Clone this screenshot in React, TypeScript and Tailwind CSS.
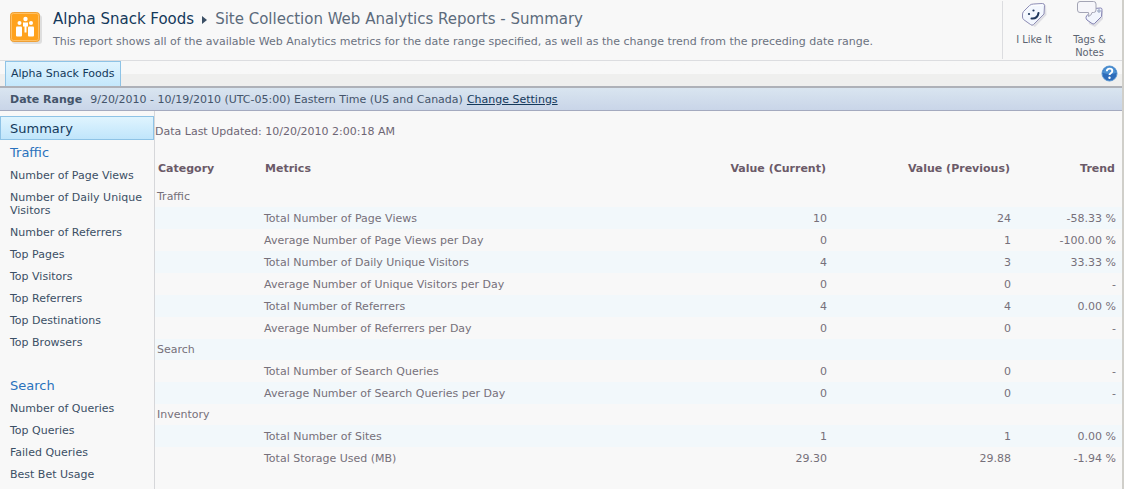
import React from "react";

const trafficLinks = [
    "Number of Page Views",
    "Number of Daily Unique Visitors",
    "Number of Referrers",
    "Top Pages",
    "Top Visitors",
    "Top Referrers",
    "Top Destinations",
    "Top Browsers",
];

const searchLinks = ["Number of Queries", "Top Queries", "Failed Queries", "Best Bet Usage"];

interface Metric {
    name: string;
    current: string;
    previous: string;
    trend: string;
}

const groups: { category: string; metrics: Metric[] }[] = [
    {
        category: "Traffic",
        metrics: [
            { name: "Total Number of Page Views", current: "10", previous: "24", trend: "-58.33 %" },
            { name: "Average Number of Page Views per Day", current: "0", previous: "1", trend: "-100.00 %" },
            { name: "Total Number of Daily Unique Visitors", current: "4", previous: "3", trend: "33.33 %" },
            { name: "Average Number of Unique Visitors per Day", current: "0", previous: "0", trend: "-" },
            { name: "Total Number of Referrers", current: "4", previous: "4", trend: "0.00 %" },
            { name: "Average Number of Referrers per Day", current: "0", previous: "0", trend: "-" },
        ],
    },
    {
        category: "Search",
        metrics: [
            { name: "Total Number of Search Queries", current: "0", previous: "0", trend: "-" },
            { name: "Average Number of Search Queries per Day", current: "0", previous: "0", trend: "-" },
        ],
    },
    {
        category: "Inventory",
        metrics: [
            { name: "Total Number of Sites", current: "1", previous: "1", trend: "0.00 %" },
            { name: "Total Storage Used (MB)", current: "29.30", previous: "29.88", trend: "-1.94 %" },
        ],
    },
];

function SiteLogo() {
    return (
        <svg width="34" height="34" viewBox="0 0 34 34" className="shrink-0" aria-hidden="true">
            <rect x="2" y="3" width="30" height="29" rx="3" fill="#dedede" />
            <rect x="0.5" y="0.5" width="29" height="29" rx="3" fill="#ffa21c" stroke="#efa035" />
            <rect x="1.5" y="1.5" width="27" height="27" rx="2" fill="none" stroke="#ffc063" />
            <g fill="#fff">
                <circle cx="15.5" cy="7" r="2.2" />
                <circle cx="9.5" cy="11" r="2" />
                <circle cx="21" cy="11" r="2" />
                <path d="M13 10.500h5v4h-1.500v6h-2v-6H13z" />
                <rect x="6" y="14.500" width="6" height="10" rx="1" />
                <rect x="18" y="14.500" width="6" height="10" rx="1" />
            </g>
        </svg>
    );
}

function LikeIcon() {
    return (
        <svg width="28" height="28" viewBox="0 0 28 28" aria-hidden="true">
            <path d="M5 14L13 6l13-1 .5 10L15 27l-9-5z" fill="#dfdfe4" />
            <path d="M2.500 15Q2.300 13 3.500 11.500L9.500 5.500Q11 4 13.500 4L22.500 3.500Q24.500 3.500 24.500 5.500L24 14 13.500 24.500Q12 26 10.500 24.500L3.500 19.500Q2.700 18.700 2.500 17z" fill="#f3f7fe" stroke="#8f8eb5" />
            <path d="M4.500 15q0-2 1-3l5-5q1-1.500 3.500-1.500l8-.5" fill="none" stroke="#fff" />
            <circle cx="9" cy="14" r="1.100" fill="#20385c" />
            <circle cx="13.500" cy="10.500" r="1.100" fill="#20385c" />
            <path d="M11.500 18.500q6 .500 7-5.500" fill="none" stroke="#20385c" strokeWidth="2" strokeLinecap="round" />
        </svg>
    );
}

function TagsIcon() {
    return (
        <svg width="28" height="28" viewBox="0 0 28 28" aria-hidden="true">
            <path d="M12 17l8-7 7 1v8l-8 8-6-3z" fill="#dddde3" />
            <path d="M10.500 16L18 8.500 24.500 8q1.500 0 1.500 1.500L25.500 16.500l-7 7q-1.500 1-2.500 0l-5-3.500q-1-1-1-2.500z" fill="#f1f5fd" stroke="#8281b2" />
            <circle cx="23" cy="11" r="1.200" fill="#fff" stroke="#6a7fa8" strokeWidth="0.800" />
            <path d="M4 1.500h13.500q2.500 0 2.500 2.500v6q0 2.500-2.500 2.500h-1.500q-.500 3-3.500 4 .500-2 0-4H4q-2.500 0-2.500-2.500V4q0-2.500 2.500-2.500z" fill="#f6f6fa" stroke="#a4a5b5" />
        </svg>
    );
}

function HelpIcon() {
    return (
        <svg width="17" height="17" viewBox="0 0 17 17" aria-hidden="true">
            <circle cx="8.500" cy="8.500" r="7.500" fill="#2d6cba" stroke="#5b97d2" />
            <path d="M2 8a6.500 6.500 0 0 1 13 0q-6 2-13 0z" fill="#4c91d3" />
            <path d="M5.800 6.200q0-2.600 2.800-2.600 2.700 0 2.700 2.300 0 1.500-1.500 2.300-1.300.800-1.300 1.800" fill="none" stroke="#fff" strokeWidth="1.900" />
            <circle cx="8.500" cy="12.700" r="1.200" fill="#fff" />
        </svg>
    );
}

function NavGroup({ title, links }: { title: string; links: string[] }) {
    return (
        <section>
            <h2 className="h-6 px-[10px] text-[13px] leading-[26px] text-[#2a72bd]">
                <a href="#">{title}</a>
            </h2>
            <ul>
                {links.map((link) => (
                    <li key={link} className="pl-[10px] pr-1 pt-[5px] pb-[4px] leading-[13px]">
                        <a href="#" className="block text-[#3b4f65]">{link}</a>
                    </li>
                ))}
            </ul>
        </section>
    );
}

function MetricsTable() {
    return (
        <table className="mt-[13px] w-full table-fixed border-collapse text-[#76707a]">
            <colgroup>
                <col className="w-[107px]" />
                <col />
                <col className="w-[160px]" />
                <col className="w-[184px]" />
                <col className="w-[105px]" />
            </colgroup>
            <thead>
                <tr className="h-[35px] align-middle text-left text-[#6b5a68]">
                    <th className="p-0 pl-[3px]">Category</th>
                    <th className="p-0 pl-[3px]">Metrics</th>
                    <th className="p-0 pr-[7px] text-right">Value (Current)</th>
                    <th className="p-0 pr-[7px] text-right">Value (Previous)</th>
                    <th className="p-0 pr-[7px] text-right">Trend</th>
                </tr>
            </thead>
            <tbody>
                {groups.map((group) => (
                    <React.Fragment key={group.category}>
                        <tr className="h-[21px] even:bg-[#f2f8fb]">
                            <td className="p-0 pl-[2px]" colSpan={5}>{group.category}</td>
                        </tr>
                        {group.metrics.map((metric) => (
                            <tr key={metric.name} className="h-[22px] even:bg-[#f2f8fb]">
                                <td className="p-0"></td>
                                <td className="p-0 pl-[2px]">{metric.name}</td>
                                <td className="p-0 pr-[6px] text-right">{metric.current}</td>
                                <td className="p-0 pr-[6px] text-right">{metric.previous}</td>
                                <td className="p-0 pr-[6px] text-right">{metric.trend}</td>
                            </tr>
                        ))}
                    </React.Fragment>
                ))}
            </tbody>
        </table>
    );
}

export default function App() {
    return (
        <div className="flex min-h-screen flex-col border-r-2 border-[#d0cfca] bg-[#f8f8f8] font-['DejaVu_Sans',sans-serif] text-[11px] leading-[13px]">
            <header className="flex h-[61px] border-b border-[#dcdde0]">
                <div className="flex flex-1 gap-[9px] pl-[10px] pt-3">
                    <SiteLogo />
                    <div>
                        <h1 className="flex items-center text-[15px] leading-[14px] text-[#5c6b7c]">
                            <a href="#" className="text-[#14395b]">Alpha Snack Foods</a>
                            <svg width="5" height="8" viewBox="0 0 5 8" className="mx-2 mt-[2px]" aria-hidden="true">
                                <path d="M0 0l5 4-5 4z" fill="#3b4f65" />
                            </svg>
                            Site Collection Web Analytics Reports - Summary
                        </h1>
                        <p className="mt-[9px] text-[#6b7280]">
                            This report shows all of the available Web Analytics metrics for the date range specified, as well as the change trend from the preceding date range.
                        </p>
                    </div>
                </div>
                <div className="mt-px flex h-[58px] border-l border-[#dcdde0] px-1 font-['DejaVu_Sans_Condensed','DejaVu_Sans',sans-serif] text-[#5c6472]">
                    <button className="-mt-px flex w-[54px] flex-col items-center gap-[5px]">
                        <LikeIcon />
                        <span>I Like It</span>
                    </button>
                    <button className="-mt-px flex w-[57px] flex-col items-center gap-[5px]">
                        <TagsIcon />
                        <span>Tags &amp;<br />Notes</span>
                    </button>
                </div>
            </header>

            <nav className="flex h-[27px] items-start justify-between border-b-2 border-[#aeb1b8] bg-linear-to-b from-[#f8f8f8] from-50% to-[#efefee] to-50% pl-[5px] pr-1">
                <a href="#" className="h-[25px] border-x border-t border-[#8ec3e6] bg-linear-to-b from-[#e0f4fe] to-[#c4e8fc] px-[5px] leading-[23px] text-[#14395b]">
                    Alpha Snack Foods
                </a>
                <button className="mt-1" aria-label="Help">
                    <HelpIcon />
                </button>
            </nav>

            <div className="flex h-[23px] items-center border-b border-[#a4aabf] bg-linear-to-b from-[#d9e5f0] to-[#c9d5e8] px-[10px] text-[#44546a]">
                <strong className="mr-2">Date Range</strong>
                <span className="mr-1">9/20/2010 - 10/19/2010 (UTC-05:00) Eastern Time (US and Canada)</span>
                <a href="#" className="text-[#14395b] underline">Change Settings</a>
            </div>

            <div className="flex flex-1">
                <aside className="w-[155px] shrink-0 border-r border-[#d6d7da] pt-[5px]">
                    <a href="#" className="block h-6 border border-[#8ec3e6] bg-linear-to-b from-[#dff4fe] to-[#c0e5fb] px-[9px] text-[13px] leading-[23px] text-[#14395b]">
                        Summary
                    </a>
                    <div className="flex flex-col gap-5">
                        <NavGroup title="Traffic" links={trafficLinks} />
                        <NavGroup title="Search" links={searchLinks} />
                    </div>
                </aside>
                <main className="flex-1 pt-[14px]">
                    <p className="text-[#6e6674]">Data Last Updated: 10/20/2010 2:00:18 AM</p>
                    <MetricsTable />
                </main>
            </div>
        </div>
    );
}
